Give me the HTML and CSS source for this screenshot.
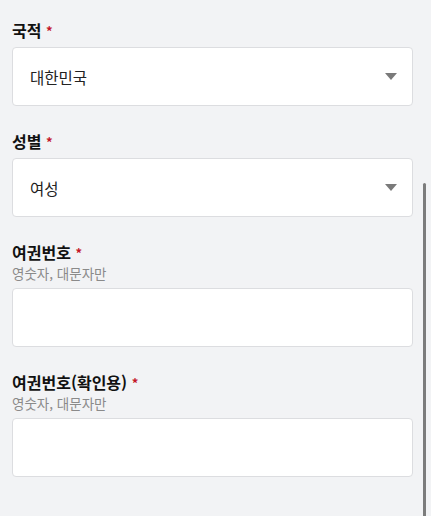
FILE: index.html
```html
<!DOCTYPE html>
<html lang="ko">
<head>
<meta charset="utf-8">
<link rel="stylesheet" href="styles.css">
</head>
<body>
<div class="form">
  <div class="field">
    <div class="label">국적 <span class="req">*</span></div>
    <div class="box select">
      <span class="value">대한민국</span>
      <svg class="caret" width="12" height="7" viewBox="0 0 12 7"><path d="M0 0H12L6 7Z" fill="#7a7a7a"/></svg>
    </div>
  </div>
  <div class="field">
    <div class="label">성별 <span class="req">*</span></div>
    <div class="box select">
      <span class="value">여성</span>
      <svg class="caret" width="12" height="7" viewBox="0 0 12 7"><path d="M0 0H12L6 7Z" fill="#7a7a7a"/></svg>
    </div>
  </div>
  <div class="field">
    <div class="label">여권번호 <span class="req">*</span></div>
    <div class="hint">영숫자, 대문자만</div>
    <div class="box"></div>
  </div>
  <div class="field">
    <div class="label">여권번호(확인용) <span class="req">*</span></div>
    <div class="hint">영숫자, 대문자만</div>
    <div class="box"></div>
  </div>
</div>
<div class="scrollbar"></div>
</body>
</html>
```
FILE: styles.css
```css
html, body {
  margin: 0;
  padding: 0;
  background: #f2f3f5;
  height: 100%;
  overflow: hidden;
}
body {
  font-family: "Noto Sans CJK KR", "Noto Sans", sans-serif;
  color: #111;
  position: relative;
}
.form {
  padding: 20px 18px 0 12px;
  display: flex;
  flex-direction: column;
  gap: 25px;
}
.field {
  display: flex;
  flex-direction: column;
}
.label {
  font-size: 16px;
  font-weight: 700;
  line-height: 20px;
  height: 20px;
  color: #111;
  margin-bottom: 7px;
}
.req {
  color: #c4162a;
  font-size: 13px;
  font-weight: 700;
  line-height: 1;
  vertical-align: 1px;
}
.hint {
  font-size: 13.5px;
  line-height: 18px;
  height: 18px;
  color: #8a8a8a;
  margin-top: -5px;
  margin-bottom: 6px;
}
.box {
  height: 59px;
  flex: none;
  box-sizing: border-box;
  background: #fff;
  border: 1px solid #dcdde0;
  border-radius: 4px;
}
.select {
  display: flex;
  align-items: center;
  justify-content: space-between;
  padding: 0 15px 0 17px;
}
.value {
  font-size: 15.5px;
  color: #222;
}
.caret {
  display: block;
}
.scrollbar {
  position: absolute;
  left: 423px;
  top: 183px;
  width: 3px;
  height: 340px;
  background: #7c7c7c;
  border-radius: 2px;
}
```
